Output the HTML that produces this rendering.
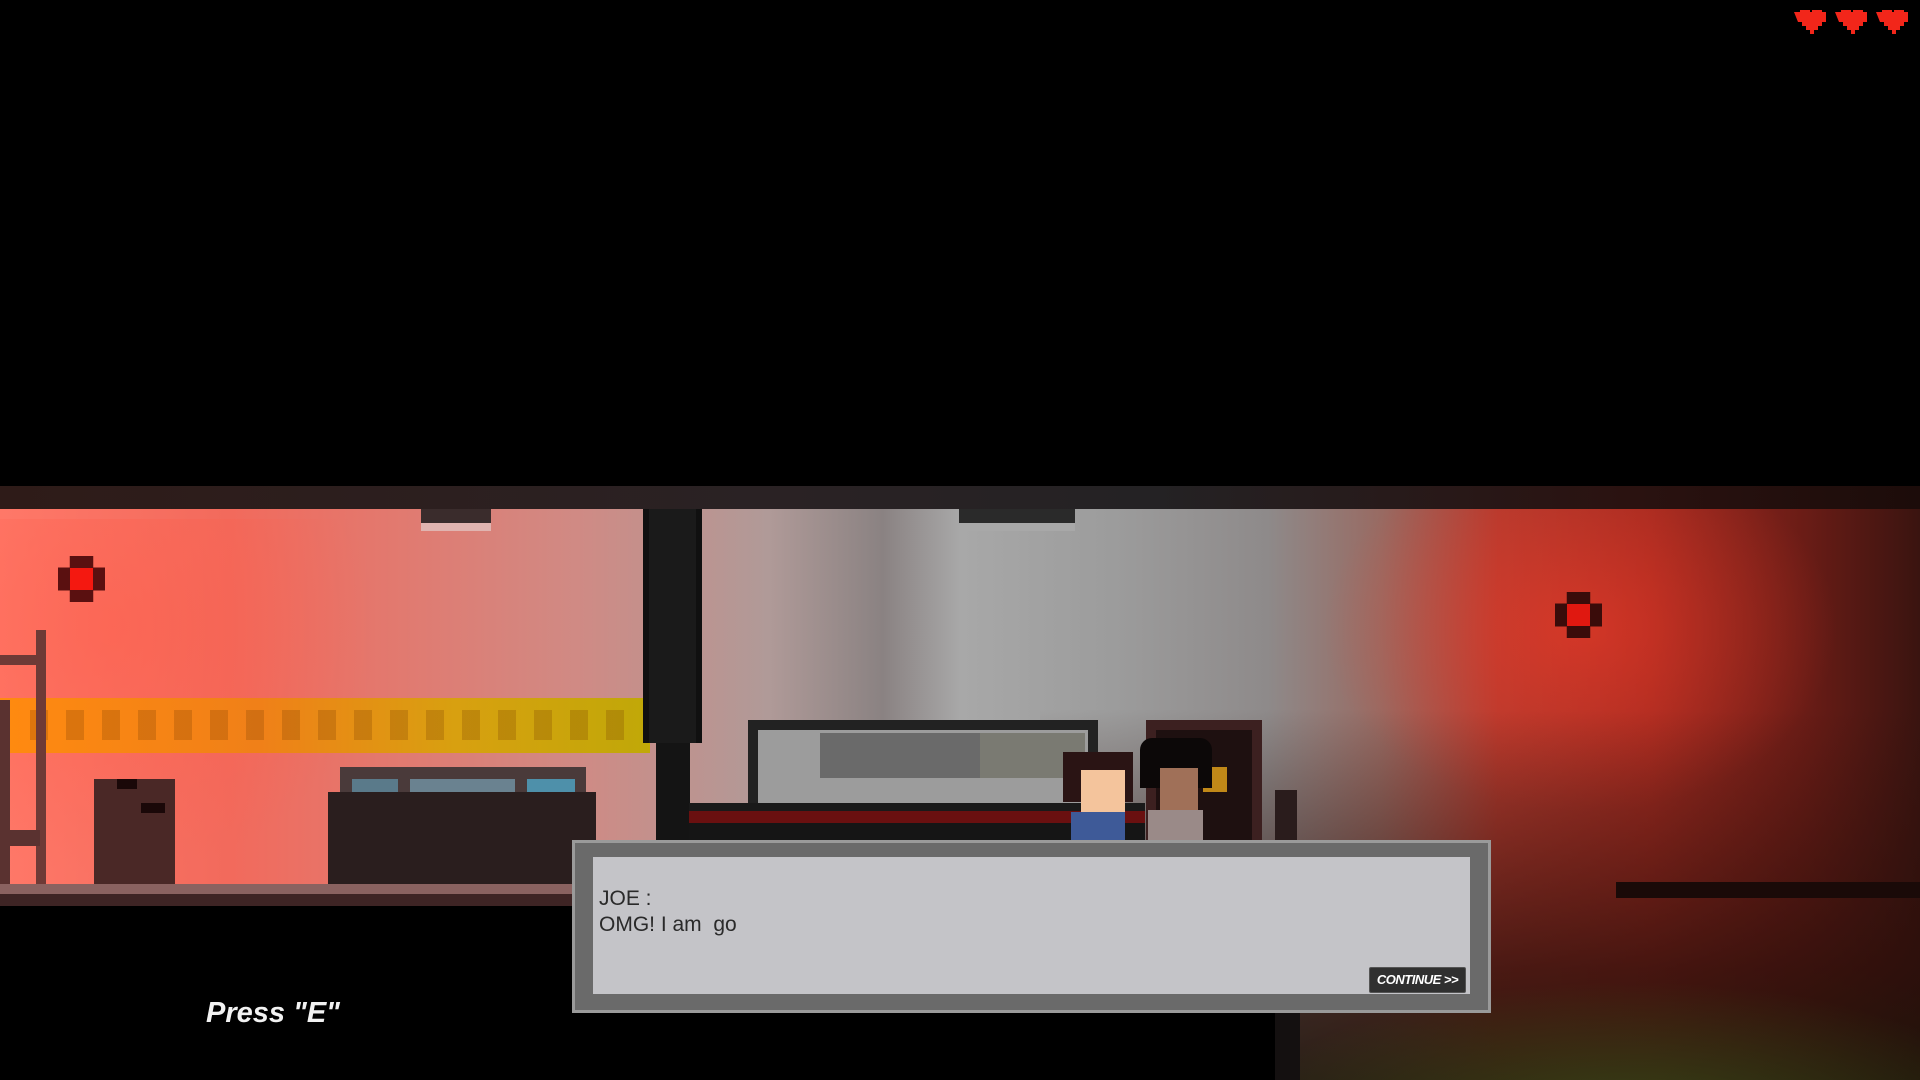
<!DOCTYPE html>
<html><head><meta charset="utf-8"><style>
*{margin:0;padding:0;box-sizing:border-box}
body{width:1920px;height:1080px;background:#000;position:relative;overflow:hidden;font-family:"Liberation Sans",sans-serif}
.a{position:absolute}
</style></head><body>
<svg class="a" style="left:1792px;top:8px" width="120" height="28" viewBox="0 0 120 28">
<g fill="#f2261a">
<path d="M2 4h6v-2h10v2h2v-2h10v2h4v10h-4v4h-4v4h-4v4h-4v-4h-4v-4h-4v-4h-4z"/>
<path transform="translate(41 0)" d="M2 4h6v-2h10v2h2v-2h10v2h4v10h-4v4h-4v4h-4v4h-4v-4h-4v-4h-4v-4h-4z"/>
<path transform="translate(82 0)" d="M2 4h6v-2h10v2h2v-2h10v2h4v10h-4v4h-4v4h-4v4h-4v-4h-4v-4h-4v-4h-4z"/>
</g></svg>
<div class="a" style="left:0;top:486px;width:1920px;height:23px;background:linear-gradient(90deg,#2e1b18,#2a2224 40%,#242224 60%,#2a1210 85%,#1c0c0a)"></div>
<div class="a" style="left:0;top:509px;width:1920px;height:571px;overflow:hidden;background:linear-gradient(90deg,#ff7868 0%,#f26a5c 12%,#d08a84 30%,#b09a98 40%,#8a8282 46%,#a8a8a8 50%,#9c9c9c 58%,#8e8a8a 66%,#986a62 72%,#b03a2e 78%,#a02a20 86%,#6a1c16 94%,#3a1410 100%)">
 <div class="a" style="left:1300px;top:-80px;width:560px;height:400px;background:radial-gradient(ellipse at center,rgba(255,60,40,.5),rgba(255,60,40,0) 65%)"></div>
 <div class="a" style="left:0;top:10px;width:380px;height:360px;background:radial-gradient(ellipse at 30% 30%,rgba(255,90,70,.45),rgba(255,90,70,0) 70%)"></div>
 <div class="a" style="left:1040px;top:200px;width:880px;height:371px;background:linear-gradient(180deg,rgba(40,12,8,0),rgba(40,14,10,.75) 70%,rgba(30,20,10,.9))"></div>
 <div class="a" style="left:1200px;top:460px;width:720px;height:160px;background:radial-gradient(ellipse at 60% 100%,rgba(70,100,30,.6),rgba(0,0,0,0) 65%)"></div>
</div>
<div class="a" style="left:0;top:906px;width:1290px;height:174px;background:#000"></div>
<div class="a" style="left:1275px;top:990px;width:25px;height:90px;background:#141010"></div>
<div class="a" style="left:0;top:884px;width:580px;height:22px;background:linear-gradient(180deg,#8a6260 0 45%,#3e2424 45%)"></div>
<div class="a" style="left:1616px;top:882px;width:304px;height:16px;background:#1a0a08"></div>
<div class="a" style="left:0;top:698px;width:650px;height:55px;background:linear-gradient(90deg,#ff8a10,#f08018 40%,#d8a010 70%,#c0a808)"></div>
<div class="a" style="left:30px;top:710px;width:610px;height:30px;background:repeating-linear-gradient(90deg,rgba(120,60,0,.25) 0 18px,rgba(0,0,0,0) 18px 36px)"></div>
<div class="a" style="left:421px;top:509px;width:70px;height:14px;background:#3a2c2c"></div>
<div class="a" style="left:421px;top:523px;width:70px;height:8px;background:#e0b4b0"></div>
<div class="a" style="left:959px;top:509px;width:116px;height:14px;background:#2a2a2a"></div>
<div class="a" style="left:959px;top:523px;width:116px;height:8px;background:#a8a8a8"></div>
<div class="a" style="left:643px;top:509px;width:59px;height:234px;background:#1a1a1a;border-left:6px solid #101010;border-right:6px solid #101010"></div>
<div class="a" style="left:656px;top:743px;width:34px;height:97px;background:#141414"></div>
<div class="a" style="left:58px;top:556px;width:47px;height:46px;background:#5a1010;clip-path:polygon(25% 0,75% 0,75% 25%,100% 25%,100% 75%,75% 75%,75% 100%,25% 100%,25% 75%,0 75%,0 25%,25% 25%)"></div>
<div class="a" style="left:70px;top:568px;width:23px;height:22px;background:#f41810"></div>
<div class="a" style="left:1555px;top:592px;width:47px;height:46px;background:#3a0c0a;clip-path:polygon(25% 0,75% 0,75% 25%,100% 25%,100% 75%,75% 75%,75% 100%,25% 100%,25% 75%,0 75%,0 25%,25% 25%)"></div>
<div class="a" style="left:1567px;top:604px;width:23px;height:22px;background:#e01810"></div>
<div class="a" style="left:0;top:630px;width:46px;height:254px;border-right:10px solid #6e3a36"></div>
<div class="a" style="left:0;top:655px;width:36px;height:10px;background:#6e3a36"></div>
<div class="a" style="left:0;top:830px;width:40px;height:16px;background:#5a3230"></div>
<div class="a" style="left:0;top:700px;width:10px;height:184px;background:#5a3230"></div>
<div class="a" style="left:94px;top:779px;width:81px;height:105px;background:#4a2826"></div>
<div class="a" style="left:117px;top:779px;width:20px;height:10px;background:#1a0808"></div>
<div class="a" style="left:141px;top:803px;width:24px;height:10px;background:#1a0808"></div>
<div class="a" style="left:340px;top:767px;width:246px;height:40px;background:#4a3a3a"></div>
<div class="a" style="left:352px;top:779px;width:46px;height:24px;background:#5a7a8a"></div>
<div class="a" style="left:410px;top:779px;width:105px;height:24px;background:#6a8290"></div>
<div class="a" style="left:527px;top:779px;width:48px;height:24px;background:#4e90aa"></div>
<div class="a" style="left:328px;top:792px;width:268px;height:92px;background:#2a1e1e"></div>
<div class="a" style="left:748px;top:720px;width:350px;height:91px;background:#9c9c9c;border:10px solid #222;border-bottom:none"></div>
<div class="a" style="left:820px;top:733px;width:160px;height:45px;background:#6a6a6a"></div>
<div class="a" style="left:980px;top:733px;width:105px;height:45px;background:#7a7a72"></div>
<div class="a" style="left:689px;top:803px;width:456px;height:8px;background:#1a1a1a"></div>
<div class="a" style="left:689px;top:811px;width:456px;height:12px;background:#6a1010"></div>
<div class="a" style="left:689px;top:823px;width:456px;height:17px;background:#151515"></div>
<div class="a" style="left:1146px;top:720px;width:116px;height:120px;background:#1e1010;border:10px solid #3c2020;border-bottom:none"></div>
<div class="a" style="left:1203px;top:767px;width:24px;height:25px;background:#c08818"></div>
<div class="a" style="left:1063px;top:752px;width:70px;height:50px;background:#2a1414"></div>
<div class="a" style="left:1081px;top:770px;width:44px;height:42px;background:#f4c49c"></div>
<div class="a" style="left:1071px;top:812px;width:54px;height:28px;background:#3e5a98"></div>
<div class="a" style="left:1140px;top:738px;width:72px;height:50px;background:#0c0808;border-radius:12px 12px 0 0"></div>
<div class="a" style="left:1160px;top:768px;width:38px;height:62px;background:#a07058"></div>
<div class="a" style="left:1148px;top:810px;width:55px;height:30px;background:#9a8a88"></div>
<div class="a" style="left:1275px;top:790px;width:22px;height:50px;background:#2a1c1c"></div>
<div class="a" style="left:572px;top:840px;width:919px;height:173px;background:#6a6a6a;border:3px solid #9a9a9a"></div>
<div class="a" style="left:593px;top:857px;width:877px;height:137px;background:#c4c4c8"></div>
<div class="a" style="left:599px;top:886px;font-size:21px;line-height:26px;color:#2a2a2a;white-space:pre">JOE :
OMG! I am  go</div>
<div class="a" style="left:1369px;top:967px;width:97px;height:26px;background:#303030;border:1px solid #555;border-radius:2px;color:#fff;font-size:13px;font-weight:bold;font-style:italic;text-align:center;line-height:24px;letter-spacing:-.5px">CONTINUE &gt;&gt;</div>
<div class="a" style="left:206px;top:997px;font-size:29px;font-weight:bold;font-style:italic;color:#f2f2f2">Press "E"</div>
</body></html>
